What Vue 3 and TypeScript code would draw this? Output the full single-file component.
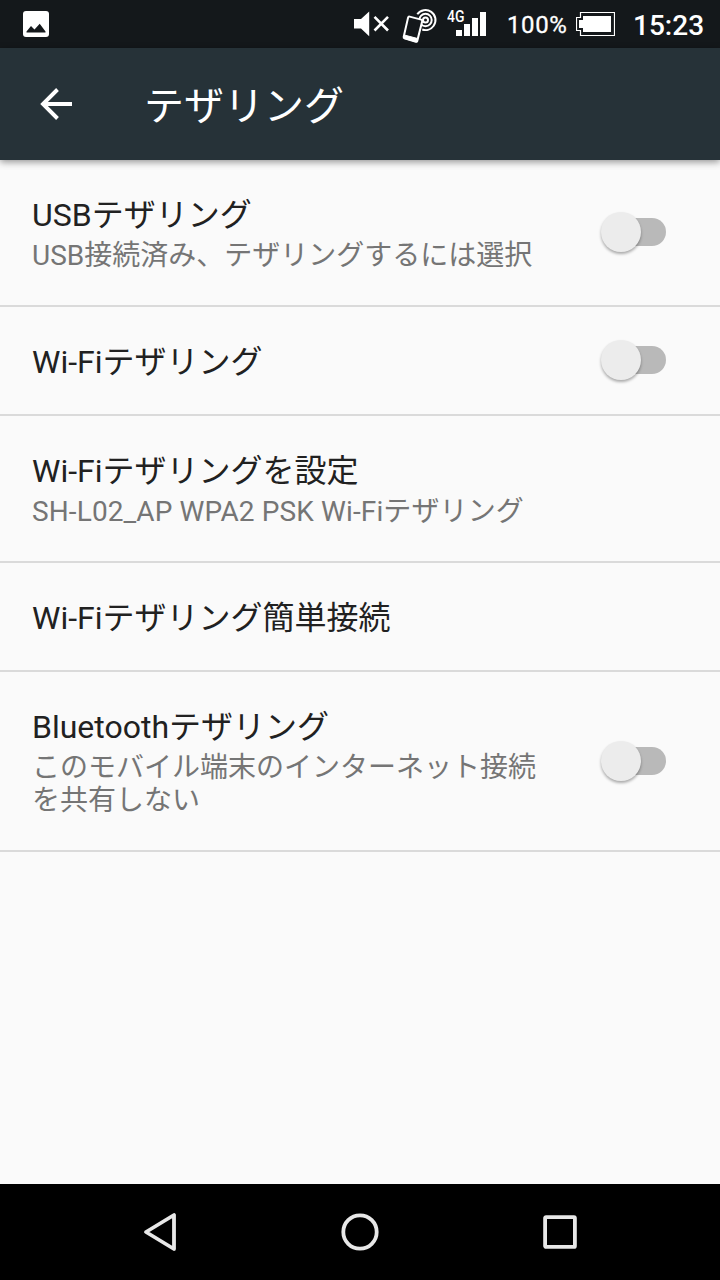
<script setup lang="ts">
import { ref } from 'vue'

interface Item {
  title: string
  summary?: string
  latin?: boolean
  toggle?: boolean
  size: 'single' | 'double' | 'triple'
}

const items = ref<Item[]>([
  { title: 'USBテザリング', summary: 'USB接続済み、テザリングするには選択', toggle: true, size: 'double' },
  { title: 'Wi-Fiテザリング', toggle: true, size: 'single' },
  { title: 'Wi-Fiテザリングを設定', summary: 'SH-L02_AP WPA2 PSK Wi-Fiテザリング', latin: true, size: 'double' },
  { title: 'Wi-Fiテザリング簡単接続', size: 'single' },
  { title: 'Bluetoothテザリング', summary: 'このモバイル端末のインターネット接続を共有しない', toggle: true, size: 'triple' },
])
</script>

<template>
  <div class="screen">
    <div class="status">
      <svg class="photo" width="26" height="26" viewBox="0 0 26 26">
        <rect width="26" height="26" rx="3" fill="#fff" />
        <path d="M3.5 21.5V20.5L8 15 11.5 18.5 16.7 12.8 22.5 20.5V21.5Z" fill="#14181b" />
      </svg>
      <svg class="mute" width="36" height="26" viewBox="0 0 36 26" fill="#fff">
        <path d="M0 8H7L15.2.6V25.2L7 17.6H0Z" />
        <path d="M20.5 5.8 34 19.5M34 5.8 20.5 19.5" stroke="#fff" stroke-width="2.6" />
      </svg>
      <svg class="nfc" width="36" height="36" viewBox="0 0 36 36" fill="none" stroke="#fff">
        <g stroke-width="2">
          <circle cx="23.5" cy="12" r="10" stroke-dasharray="44 100" transform="rotate(-145 23.5 12)" />
          <circle cx="23.5" cy="12" r="6.2" />
          <circle cx="23.5" cy="12" r="2.5" />
        </g>
        <path d="M7.6 8.6 19.2 11.6Q20.5 12 20.2 13.3L15.2 33.1Q14.9 34 13.9 33.7L2.5 30.3Q1.4 30 1.7 28.8L6.1 9.5Q6.5 8.3 7.6 8.6Z" fill="#14181b" stroke-width="2" />
        <path d="M2.3 27 15.9 30.6 14.8 34 2 30.5Z" fill="#fff" stroke-width="1" />
      </svg>
      <div class="signal">
        <span class="network">4G</span>
        <svg width="30" height="24" viewBox="0 0 30 24" fill="#fff">
          <path d="M0 18H6V24H0ZM8 12H14V24H8ZM16 6H22V24H16ZM24 0H30V24H24Z" />
        </svg>
      </div>
      <span class="percent">100%</span>
      <svg class="battery" width="39" height="24" viewBox="0 0 39 24">
        <path d="M4.5.5H38.5V23.5H4.5V18.5H.5V5.5H4.5Z" fill="none" stroke="#fff" stroke-width="1.2" />
        <path d="M7 4H35V20H7V16H3V8H7Z" fill="#fff" />
      </svg>
      <span class="clock">15:23</span>
    </div>

    <header class="bar">
      <svg class="back" width="32" height="32" viewBox="0 0 32 32" fill="none" stroke="#fff" stroke-width="3.9">
        <path d="M32 16H3M17.5 1.5 3 16 17.5 30.5" />
      </svg>
      <h1>テザリング</h1>
    </header>

    <main class="list">
      <div v-for="item in items" :key="item.title" class="row" :class="item.size">
        <div class="texts">
          <div class="title">{{ item.title }}</div>
          <div v-if="item.summary" class="summary" :class="{ latin: item.latin }">{{ item.summary }}</div>
        </div>
        <div v-if="item.toggle" class="switch"><span class="thumb"></span></div>
      </div>
    </main>

    <nav class="nav">
      <svg width="40" height="40" viewBox="0 0 40 40"><path d="M34 3V37L6 20Z" /></svg>
      <svg width="40" height="40" viewBox="0 0 40 40"><circle cx="20" cy="20" r="16.7" /></svg>
      <svg width="40" height="40" viewBox="0 0 40 40"><rect x="5.1" y="5.1" width="29.8" height="29.8" rx="1" /></svg>
    </nav>
  </div>
</template>

<style>
body {
  margin: 0;
}
</style>

<style scoped>
.screen {
  display: flex;
  flex-direction: column;
  width: 720px;
  height: 1280px;
  overflow: hidden;
  background: #fafafa;
  font-family: Roboto, "Noto Sans CJK JP", sans-serif;
}
.screen svg {
  display: block;
  flex: none;
}
.status {
  display: flex;
  align-items: flex-start;
  box-sizing: border-box;
  height: 48px;
  flex: none;
  background: #14181b;
  color: #fff;
}
.photo { margin: 11px 0 0 23px; }
.mute { margin: 11px 0 0 305px; }
.nfc { margin: 8px 0 0 12px; }
.signal {
  display: grid;
  width: 40px;
  height: 32px;
  margin: 6px 0 0 9px;
}
.signal > * { grid-area: 1 / 1; }
.signal svg { margin: 6px 0 0 9px; }
.network {
  justify-self: start;
  font-size: 17px;
  line-height: 20px;
  font-weight: 500;
  transform: scaleX(0.82);
  transform-origin: 0 0;
}
.percent {
  width: 68px;
  margin: 8px 0 0 20px;
  font-size: 24px;
  line-height: 34px;
  letter-spacing: 0.6px;
  -webkit-text-stroke: 0.3px #fff;
}
.battery { margin: 12px 0 0 1px; }
.clock {
  margin: 9px 0 0 18px;
  font-size: 28px;
  line-height: 34px;
  font-weight: 500;
}
.bar {
  position: relative;
  display: flex;
  align-items: center;
  height: 112px;
  flex: none;
  background: #263238;
  color: #fff;
  box-shadow: 0 2px 7px rgba(0, 0, 0, 0.42);
}
.back { margin-left: 40px; }
h1 {
  margin: 5px 0 0 72px;
  font-size: 40px;
  line-height: 48px;
  font-weight: 400;
}
.list { flex: 1; }
.row {
  display: flex;
  align-items: center;
  justify-content: space-between;
  box-sizing: border-box;
  padding: 0 54px 0 32px;
  border-bottom: 2px solid #dadada;
}
.single { height: 109px; }
.double { height: 147px; }
.triple { height: 180px; }
.texts {
  width: 512px;
  padding-top: 3px;
}
.single .texts { padding-top: 2px; }
.title {
  color: #212121;
  font-size: 32px;
  line-height: 38px;
}
.summary {
  margin-top: 5px;
  color: #757575;
  font-size: 28px;
  line-height: 33px;
}
.latin { letter-spacing: 0.12px; }
.switch {
  display: flex;
  align-items: center;
  width: 52px;
  height: 28px;
  border-radius: 14px;
  background: #b9b9b9;
}
.single .switch,
.double .switch { margin-bottom: 1px; }
.thumb {
  flex: none;
  width: 40px;
  height: 40px;
  margin-left: -13px;
  border-radius: 50%;
  background: #ececec;
  box-shadow: 0 2px 3px rgba(0, 0, 0, 0.32);
}
.nav {
  display: flex;
  align-items: center;
  justify-content: center;
  gap: 160px;
  height: 96px;
  flex: none;
  background: #000;
}
.nav svg {
  fill: none;
  stroke: #e8e8e8;
  stroke-width: 3.8;
  stroke-linejoin: round;
}
</style>
